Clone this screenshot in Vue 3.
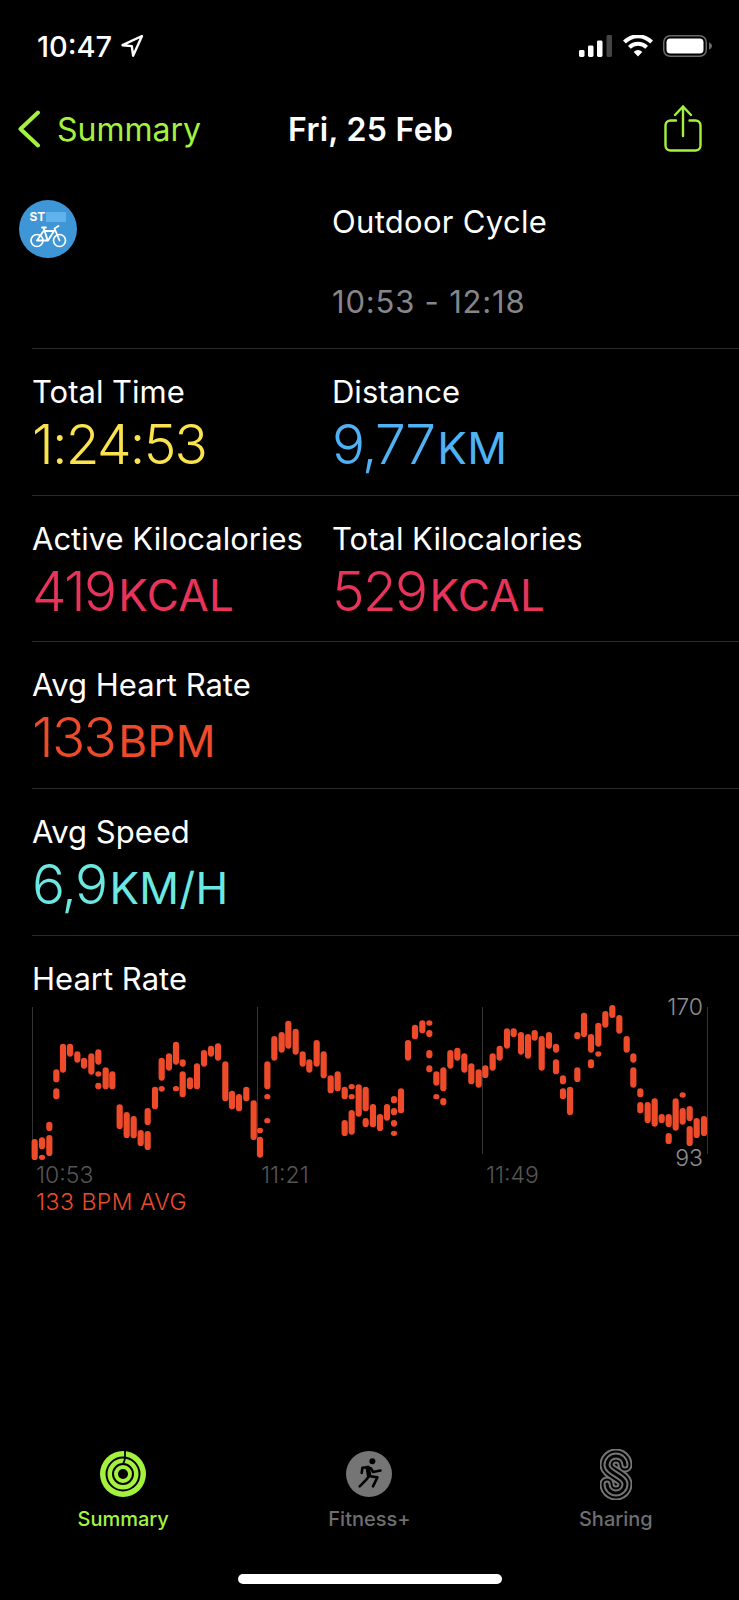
<script setup>
const rows = [
  [{ label: 'Total Time', value: '1:24:53', unit: '', color: '#fbe34f' }, { label: 'Distance', value: '9,77', unit: 'KM', color: '#4fb2f5' }],
  [{ label: 'Active Kilocalories', value: '419', unit: 'KCAL', color: '#e8345a' }, { label: 'Total Kilocalories', value: '529', unit: 'KCAL', color: '#e8345a' }],
  [{ label: 'Avg Heart Rate', value: '133', unit: 'BPM', color: '#ee4b2b' }],
  [{ label: 'Avg Speed', value: '6,9', unit: 'KM/H', color: '#6ce8e2' }],
]
const raw2 = [[104,447,510],[126,442,478],[126,494,510],[148,395,423],[148,435,498],[169,238,277],[169,295,328],[189,161,248],[210,161,200],[232,184,218],[252,203,236],[274,190,254],[295,178,224],[295,244,260],[295,278,298],[317,232,298],[337,244,298],[359,343,417],[380,366,444],[401,378,445],[422,420,468],[443,354,405],[443,423,480],[465,290,358],[485,288,305],[485,203,272],[507,190,242],[528,155,224],[528,288,304],[548,208,230],[548,244,322],[570,262,298],[591,220,298],[612,180,230],[633,167,200],[654,160,212],[676,214,334],[696,302,358],[717,312,364],[739,290,334],[761,331,450],[780,413,430],[780,440,503],[802,214,298],[802,312,328],[802,384,400],[823,138,212],[845,126,188],[865,92,176],[887,116,194],[908,184,230],[928,208,248],[950,150,230],[971,184,265],[992,256,310],[1013,244,304],[1034,290,328],[1034,390,438],[1055,282,298],[1055,312,328],[1055,360,434],[1076,283,380],[1097,290,364],[1097,384,411]]
const raw3 = [[12,342,412],[33,372,423],[54,342,392],[75,318,340],[75,354,376],[75,390,410],[75,422,438],[96,295,370],[117,150,212],[138,104,148],[160,91,130],[181,91,107],[181,120,141],[181,180,205],[181,226,247],[202,244,287],[202,312,328],[223,232,304],[223,324,346],[244,180,236],[265,173,212],[286,190,248],[307,220,283],[329,238,293],[349,226,264],[371,190,242],[392,167,212],[414,115,176],[434,115,141],[456,126,194],[477,132,206],[497,120,152],[518,138,242],[540,126,176],[561,161,188],[561,208,253],[582,256,283],[582,295,328],[603,290,375],[625,126,148],[625,232,276],[645,68,141],[666,132,188],[666,208,235],[688,98,170],[688,184,200],[709,63,113],[730,45,84],[751,75,131],[773,138,188],[793,190,218],[793,232,293],[814,295,322],[814,336,370],[836,336,399],[857,325,410],[878,372,399],[899,372,411],[899,429,462],[920,325,422],[941,307,323],[941,354,404],[962,348,393],[962,408,468],[983,384,444],[1005,378,438]]
// Chart canvas origin is (24, 1000) in page coordinates.
const bars = [
  ...raw2.map(([x, a, b]) => ({ x: x / 3 - 3.1 - 24, y: 990 + a / 3 - 1000, h: (b - a) / 3 })),
  ...raw3.map(([x, a, b]) => ({ x: 369 + x / 3 - 3.1 - 24, y: 990 + a / 3 - 1000, h: (b - a) / 3 })),
]
const grid = [8, 233, 458, 683]
const sPath = 'M25 16A9 9 0 0 0 7 16C7 24 25 27 25 35A9 9 0 0 1 7 35'
const sLayers = [
  { w: 15, c: '#757575' },
  { w: 11, c: '#000' },
  { w: 7, c: '#757575' },
  { w: 3, c: '#000' },
]
</script>

<template>
  <div class="screen">
    <header class="status">
      <div class="clock">
        <span>10:47</span>
        <svg class="loc" viewBox="0 0 24 24" width="24" height="24"><path d="M22 2 2.500 11.200l9.300.9 1.300 9.600z" fill="none" stroke="#fff" stroke-width="2.400" stroke-linejoin="round"/></svg>
      </div>
      <div class="indicators">
        <svg width="34" height="22" viewBox="0 0 34 22"><rect x="0" y="15" width="5.500" height="7" rx="1.400" fill="#fff"/><rect x="9" y="10.500" width="5.500" height="11.500" rx="1.400" fill="#fff"/><rect x="18" y="5.500" width="5.500" height="16.500" rx="1.400" fill="#fff"/><rect x="27.500" y="0" width="5.500" height="22" rx="1.400" fill="#444"/></svg>
        <svg width="30" height="22" viewBox="0 0 30 22"><path d="M15 21.500l-4.300-4.600a6 6 0 0 1 8.600 0zM7.800 13.800 5 10.900a14 14 0 0 1 20 0l-2.800 2.900a10 10 0 0 0-14.400 0zM2.800 8.500 0 5.600a21 21 0 0 1 30 0l-2.800 2.900a17 17 0 0 0-24.400 0z" fill="#fff"/></svg>
        <svg width="49" height="22" viewBox="0 0 49 22"><rect x="0.750" y="0.750" width="42.500" height="20.500" rx="6.500" fill="none" stroke="#6a6a6a" stroke-width="1.500"/><rect x="3.500" y="3.500" width="37" height="15" rx="3.800" fill="#fff"/><path d="M46 7.500c2 .6 3 2 3 3.500s-1 2.900-3 3.500z" fill="#6a6a6a"/></svg>
      </div>
    </header>

    <nav class="nav">
      <div class="back">
        <svg width="24" height="38" viewBox="0 0 24 38"><path d="M20 2.500 2.500 19 20 35.500" fill="none" stroke="#a5f23e" stroke-width="4" stroke-linecap="round" stroke-linejoin="round"/></svg>
        <span>Summary</span>
      </div>
      <div class="title">Fri, 25 Feb</div>
      <svg class="share" width="38" height="48" viewBox="0 0 38 48"><path d="M12 15.500H6.500A5 5 0 0 0 1.500 20.500v20A5 5 0 0 0 6.500 45.500h25A5 5 0 0 0 36.500 40.500v-20A5 5 0 0 0 31.500 15.500H25.500M19 31V1.500M11 10 19 1.500l8 8.500" fill="none" stroke="#a5f23e" stroke-width="2.400" stroke-linecap="round" stroke-linejoin="round"/></svg>
    </nav>

    <section class="head">
      <div class="badge">
        <div class="badge-top"><b>ST</b><i></i><i></i><i></i></div>
        <svg width="37" height="23" viewBox="0 0 37 23"><g fill="none" stroke="#fff"><circle cx="7" cy="15.500" r="6" stroke-width="1.700"/><circle cx="29.500" cy="15.500" r="6" stroke-width="1.700"/><path d="M7 15.500 13.500 6H24L18 15.500H7M12 2.500h4M13.500 2.500 17.500 15M29.500 15.500 24.500 3.500 28.500 1" stroke-width="1.800" stroke-linejoin="round" stroke-linecap="round"/></g></svg>
      </div>
      <div class="head-text">
        <div class="head-title">Outdoor Cycle</div>
        <div class="head-time">10:53 - 12:18</div>
      </div>
    </section>

    <section v-for="(row, i) in rows" :key="i" class="row">
      <div v-for="m in row" :key="m.label" class="metric">
        <div class="label">{{ m.label }}</div>
        <div class="value" :style="{ color: m.color }">{{ m.value }}<span class="unit">{{ m.unit }}</span></div>
      </div>
    </section>

    <section class="row chart-row">
      <div class="label">Heart Rate</div>
      <div class="chart">
        <svg class="plot" width="700" height="160" viewBox="0 0 700 160">
          <rect v-for="g in grid" :key="g" :x="g" y="7" width="1" height="147" fill="#333"/>
          <rect v-for="(b, i) in bars" :key="i" :x="b.x" :y="b.y" width="6.200" :height="b.h" rx="3.100" fill="#ee4b2b"/>
        </svg>
        <span class="max">170</span>
        <span class="min">93</span>
        <div class="times"><span>10:53</span><span>11:21</span><span>11:49</span></div>
        <div class="avg">133 BPM AVG</div>
      </div>
    </section>

    <footer class="tabs">
      <div class="tab on">
        <div class="tab-icon">
          <svg width="46" height="46" viewBox="0 0 46 46"><circle cx="23" cy="23" r="23" fill="#a5f23e"/><g fill="none" stroke="#000" stroke-width="2"><circle cx="23" cy="23" r="16.500"/><circle cx="23" cy="23" r="10"/></g><circle cx="23" cy="23" r="5" fill="#000"/><path d="M25 0v6.500c0 3-1 4-2 6.500" fill="none" stroke="#000" stroke-width="1.800"/></svg>
        </div>
        <span>Summary</span>
      </div>
      <div class="tab">
        <div class="tab-icon">
          <svg width="46" height="46" viewBox="0 0 46 46"><circle cx="23" cy="23" r="23" fill="#757575"/><circle cx="26.400" cy="10.300" r="3" fill="#000"/><path d="M15.700 22 16.400 16.800 21.500 16.300 25 17.500 27 21 34.500 19.500M21.800 16.800 23 25 31.400 26.400 27 35.300M23 25 20.300 28.600 13.700 35.300" fill="none" stroke="#000" stroke-width="2.600" stroke-linecap="round" stroke-linejoin="round"/><path d="M21.800 16.800 23 24" stroke="#000" stroke-width="4.500" stroke-linecap="round"/></svg>
        </div>
        <span>Fitness+</span>
      </div>
      <div class="tab">
        <div class="tab-icon">
          <svg class="rings" width="32" height="51" viewBox="0 0 32 51"><path v-for="l in sLayers" :key="l.w" :d="sPath" fill="none" :stroke="l.c" :stroke-width="l.w" stroke-linecap="round"/></svg>
        </div>
        <span>Sharing</span>
      </div>
    </footer>
    <div class="home"></div>
  </div>
</template>

<style>
html, body { background: #000; }
</style>

<style scoped>
.screen {
  width: 739px;
  height: 1600px;
  background: #000;
  color: #fff;
  font-family: Inter, "Liberation Sans", sans-serif;
  display: flex;
  flex-direction: column;
  overflow: hidden;
}
.status {
  height: 46px;
  padding: 23px 27px 0 37px;
  display: flex;
  justify-content: space-between;
  align-items: center;
  flex: none;
}
.clock {
  display: flex;
  align-items: center;
  gap: 8px;
  font-size: 29px;
  font-weight: 500;
}
.indicators { display: flex; align-items: center; gap: 10px; }
.nav {
  height: 120px;
  flex: none;
  position: relative;
  display: flex;
  align-items: center;
  justify-content: space-between;
  padding: 0 37px 0 18px;
}
.back {
  display: flex;
  align-items: center;
  gap: 15px;
  color: #a5f23e;
  font-size: 32px;
}
.title {
  position: absolute;
  left: 288px;
  font-size: 32px;
  font-weight: 600;
  letter-spacing: 0.3px;
}
.head {
  flex: none;
  height: 159px;
  display: flex;
  padding: 8px 0 0 19px;
  box-sizing: border-box;
}
.badge {
  width: 58px;
  height: 58px;
  margin-top: 3px;
  border-radius: 50%;
  background: #3f96d6;
  display: flex;
  flex-direction: column;
  align-items: center;
  box-sizing: border-box;
  padding-top: 11px;
  gap: 3px;
}
.badge-top { display: flex; align-items: center; height: 11px; width: 37px; }
.badge-top b { font-size: 12px; font-weight: 700; color: #fff; margin-right: 1px; }
.badge-top i { width: 7.500px; height: 10px; background: #5fb2ec; }
.head-text { margin-left: 255px; margin-top: 6px; }
.head-title { font-size: 31px; line-height: 38px; letter-spacing: 0.3px; }
.head-time { font-size: 31px; line-height: 38px; margin-top: 42px; color: #86868a; letter-spacing: 0.8px; }
.row {
  flex: none;
  height: 146.700px;
  box-sizing: border-box;
  margin-left: 32px;
  border-top: 1px solid #2b2b2b;
  display: grid;
  grid-template-columns: 300px 1fr;
  padding-top: 24px;
}
.label { font-size: 31px; line-height: 38px; white-space: nowrap; }
.value {
  font-size: 55px;
  font-weight: 300;
  line-height: 58px;
  margin-top: 4px;
  letter-spacing: -1.700px;
  white-space: nowrap;
}
.unit { font-size: 44px; font-weight: 400; letter-spacing: 0.300px; margin-left: 3px; }
.chart-row { display: block; height: auto; }
.chart {
  position: relative;
  margin-left: -8px;
  height: 218px;
}
.plot { display: block; position: absolute; left: 0; top: 2px; }
.max, .min {
  position: absolute;
  right: 36px;
  font-size: 23px;
  line-height: 28px;
  color: #8e8e8e;
  font-weight: 300;
}
.max { top: -5px; }
.min { top: 146px; }
.times {
  position: absolute;
  top: 163px;
  left: 12px;
  display: flex;
  color: #555;
  font-size: 23px;
  line-height: 28px;
  font-weight: 300;
}
.times span { width: 225px; white-space: nowrap; }
.avg {
  position: absolute;
  top: 190px;
  left: 12px;
  color: #ee4b2b;
  font-size: 23px;
  line-height: 28px;
  font-weight: 300;
  letter-spacing: 0.500px;
  white-space: nowrap;
}
.tabs {
  margin-top: auto;
  display: grid;
  grid-template-columns: repeat(3, 1fr);
  flex: none;
}
.tab {
  display: flex;
  flex-direction: column;
  align-items: center;
  color: #6e6e6e;
  font-size: 20px;
  line-height: 24px;
  font-weight: 500;
  gap: 10px;
}
.tab-icon {
  height: 46px;
  display: flex;
  align-items: center;
  justify-content: center;
}
.tab.on { color: #a5f23e; }
.home {
  flex: none;
  width: 264px;
  height: 10px;
  border-radius: 5px;
  background: #fff;
  margin: 43px 0 16px 238px;
}
</style>
